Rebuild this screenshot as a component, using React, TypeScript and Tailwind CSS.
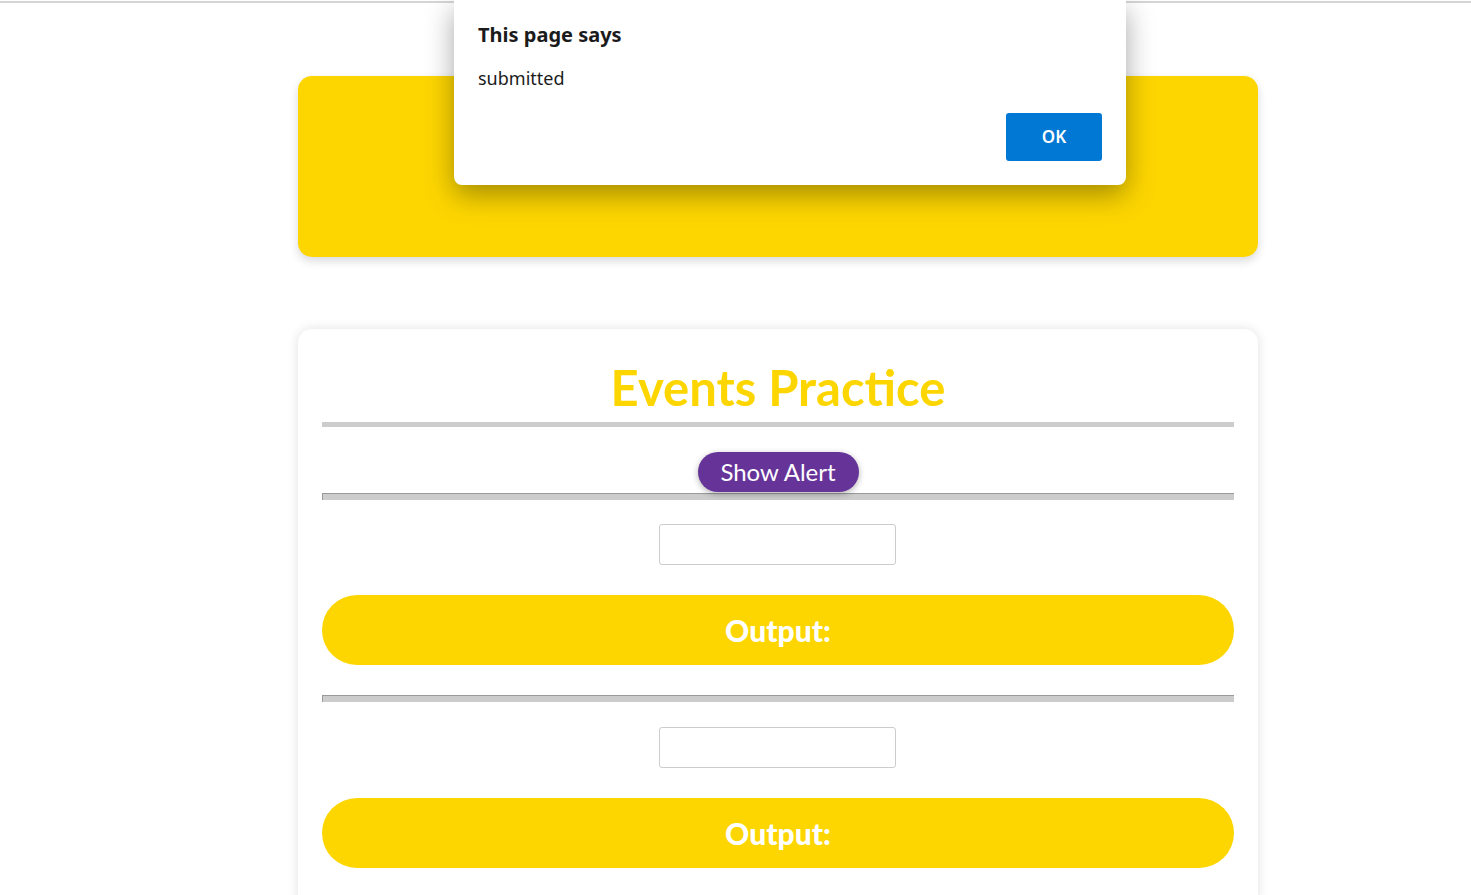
import React from "react";

function Divider({ flat }: { flat?: boolean }) {
  if (flat) return <div className="h-[5px] w-full bg-[#cccccc]" />;
  return (
    <div className="h-[7px] w-full border-t border-l border-[#9a9a9a] bg-[#cccccc]" />
  );
}

function Section({ second }: { second?: boolean }) {
  return (
    <div className="flex flex-col items-center">
      <input
        type="text"
        className={
          (second ? "mt-[25px] " : "mt-[24px] ") +
          "mr-px h-[41px] w-[237px] rounded-[3px] border border-[#cccccc] bg-white outline-none"
        }
      />
      <div className="mt-[30px] flex h-[70px] w-full items-center justify-center rounded-full bg-[#fdd600]">
        <span
          className="text-[30px] font-black text-white"
          style={{ fontFamily: "Lato, 'Liberation Sans', sans-serif" }}
        >
          Output:
        </span>
      </div>
    </div>
  );
}

export default function App() {
  return (
    <div className="relative min-h-[895px] w-full overflow-hidden bg-white" style={{ fontFamily: "Lato, sans-serif" }}>
      {/* page content */}
      <div className="ml-[298px] w-[960px] pt-[76px]">
        <div className="h-[181px] w-full rounded-[14px] bg-[#fdd600] shadow-[0_4px_10px_rgba(0,0,0,0.15)]" />
        <div className="mt-[72px] w-full rounded-[14px] bg-white px-[24px] pb-[40px] shadow-[0_0_12px_rgba(0,0,0,0.12)]">
          <h1
            className="flex h-[93px] items-center justify-center pt-[24px] text-[49px] font-bold leading-none text-[#fdd600]"
            style={{ fontFamily: "Lato, 'Liberation Sans', sans-serif" }}
          >
            Events Practice
          </h1>
          <Divider flat />
          <div className="flex justify-center pt-[25px]">
            <button
              className="h-[40px] w-[161px] rounded-full bg-[#663399] text-[24px] leading-none text-white shadow-[0_2px_6px_rgba(0,0,0,0.3)]"
              style={{ fontFamily: "Lato, 'Liberation Sans', sans-serif" }}
            >
              Show Alert
            </button>
          </div>
          <div className="mt-px">
            <Divider />
          </div>
          <Section />
          <div className="mt-[30px]">
            <Divider />
          </div>
          <Section second />
        </div>
      </div>

      {/* browser chrome line */}
      <div className="absolute left-0 right-0 top-[1px] h-[2px] bg-[#d4d4d4]" />

      {/* alert dialog */}
      <div
        className="absolute left-[454px] top-0 h-[185px] w-[672px] rounded-b-[8px] bg-white shadow-[0_10px_28px_rgba(0,0,0,0.35)]"
        style={{ fontFamily: "'Noto Sans', 'Open Sans', sans-serif" }}
      >
        <div className="pl-[24px] pt-[20px] text-[20px] font-bold leading-[30px] text-[#1b1b1b]">
          This page says
        </div>
        <div className="pl-[24px] pt-[16px] text-[18px] leading-[24px] text-[#1b1b1b]">
          submitted
        </div>
        <div className="absolute left-[552px] top-[113px] flex h-[48px] w-[96px] items-center justify-center rounded-[3px] bg-[#0078d4] text-[17px] font-semibold text-white">
          OK
        </div>
      </div>
    </div>
  );
}
